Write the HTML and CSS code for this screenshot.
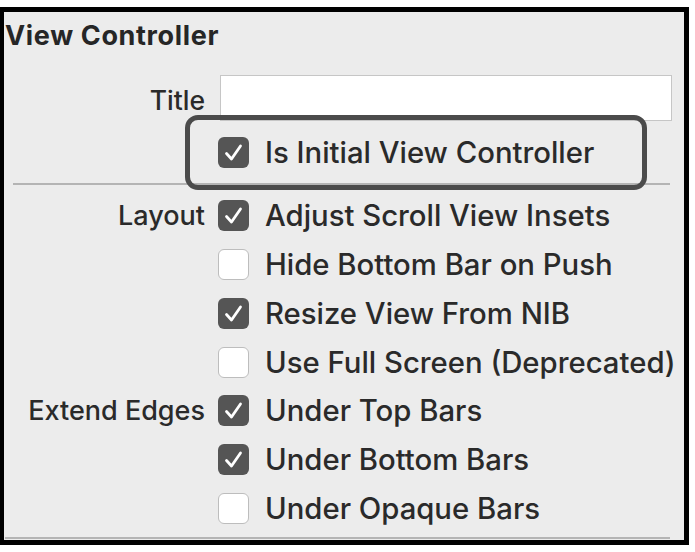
FILE: index.html
```html
<!DOCTYPE html>
<html lang="en">
<head>
<meta charset="utf-8">
<title>View Controller</title>
<link rel="stylesheet" href="styles.css">
</head>
<body>
<div class="frame">
  <div class="heading">View Controller</div>
  <div class="field-row">
    <span class="label label-title">Title</span>
    <div class="field"></div>
  </div>
  <div class="row row-initial">
    <span class="label"></span>
    <span class="box checked"><svg viewBox="0 0 31 31"><path d="M8.5 16.5 L13.5 22 L22.5 9"/></svg></span>
    <span class="text">Is Initial View Controller</span>
  </div>
  <div class="sep"></div>
  <div class="group">
    <div class="row">
      <span class="label">Layout</span>
      <span class="box checked"><svg viewBox="0 0 31 31"><path d="M8.5 16.5 L13.5 22 L22.5 9"/></svg></span>
      <span class="text">Adjust Scroll View Insets</span>
    </div>
    <div class="row">
      <span class="label"></span>
      <span class="box"></span>
      <span class="text">Hide Bottom Bar on Push</span>
    </div>
    <div class="row">
      <span class="label"></span>
      <span class="box checked"><svg viewBox="0 0 31 31"><path d="M8.5 16.5 L13.5 22 L22.5 9"/></svg></span>
      <span class="text">Resize View From NIB</span>
    </div>
    <div class="row">
      <span class="label"></span>
      <span class="box"></span>
      <span class="text">Use Full Screen (Deprecated)</span>
    </div>
    <div class="row">
      <span class="label">Extend Edges</span>
      <span class="box checked"><svg viewBox="0 0 31 31"><path d="M8.5 16.5 L13.5 22 L22.5 9"/></svg></span>
      <span class="text">Under Top Bars</span>
    </div>
    <div class="row">
      <span class="label"></span>
      <span class="box checked"><svg viewBox="0 0 31 31"><path d="M8.5 16.5 L13.5 22 L22.5 9"/></svg></span>
      <span class="text">Under Bottom Bars</span>
    </div>
    <div class="row">
      <span class="label"></span>
      <span class="box"></span>
      <span class="text">Under Opaque Bars</span>
    </div>
  </div>
  <div class="sep sep-bottom"></div>
</div>
</body>
</html>
```

FILE: styles.css
```css
html, body {
  margin: 0;
  padding: 0;
  background: #ffffff;
}

body {
  font-family: Inter, "Liberation Sans", Arial, sans-serif;
  color: #2a2a2a;
}

.frame {
  box-sizing: border-box;
  margin-top: 7px;
  width: 689px;
  height: 538px;
  border: 5px solid #000;
  border-left-width: 4px;
  background: #ececec;
  display: flex;
  flex-direction: column;
}

.heading {
  height: 48px;
  line-height: 48px;
  padding-left: 1px;
  font-size: 27px;
  font-weight: 700;
  letter-spacing: 0.65px;
  color: #262626;
}

.field-row {
  display: flex;
  align-items: center;
  height: 46px;
  margin-top: 15px;
}

.label {
  width: 201px;
  flex: none;
  text-align: right;
  font-size: 27px;
  font-weight: 500;
  white-space: nowrap;
}

.label-title {
  margin-top: 4px;
  font-size: 26.5px;
}

.field {
  box-sizing: border-box;
  margin-left: 15px;
  width: 452px;
  height: 46px;
  background: #fff;
  border: 1px solid #c6c6c6;
}

.row {
  display: flex;
  align-items: center;
  height: 48.75px;
}

.row-initial {
  position: relative;
  height: 62px;
}

.row-initial::after {
  content: "";
  position: absolute;
  left: 181px;
  top: -6px;
  width: 462px;
  height: 75px;
  box-sizing: border-box;
  border: 5px solid #4b4b4b;
  border-radius: 13px;
}

.box {
  box-sizing: border-box;
  flex: none;
  width: 31px;
  height: 31px;
  margin-left: 13px;
  border-radius: 6px;
  background: #fff;
  border: 1.5px solid #bdbdbd;
  display: flex;
}

.box.checked {
  background: #555555;
  border: none;
}

.box svg {
  width: 31px;
  height: 31px;
}

.box path {
  fill: none;
  stroke: #fff;
  stroke-width: 2.8;
  stroke-linecap: round;
  stroke-linejoin: round;
}

.text {
  margin-left: 16px;
  font-size: 29.3px;
  font-weight: 500;
  white-space: nowrap;
}

.sep {
  height: 2px;
  background: #b4b4b4;
  margin: 0 14px 0 9px;
}

.group {
  padding-top: 6.6px;
}

.sep-bottom {
  margin: 4px 14px 0 1px;
}
```
